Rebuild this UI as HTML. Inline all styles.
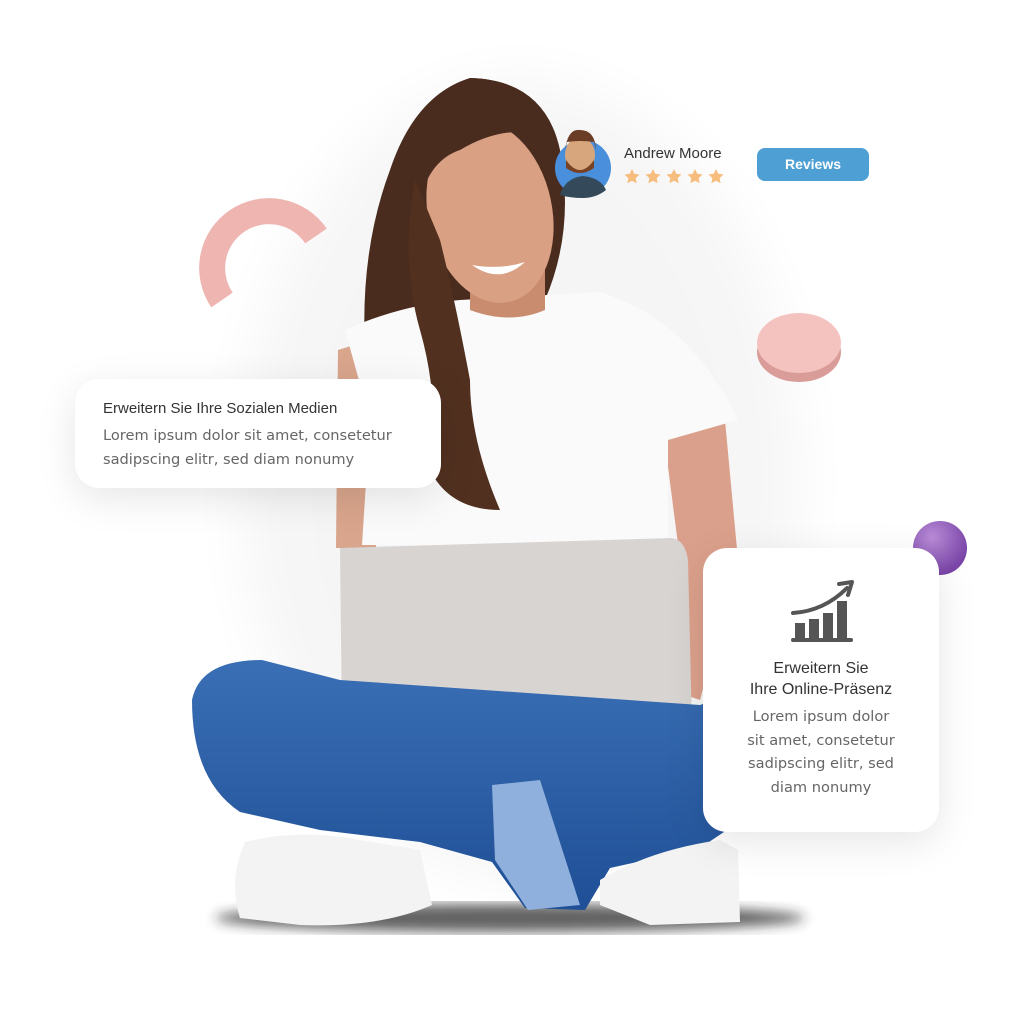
<!DOCTYPE html>
<html><head><meta charset="utf-8">
<style>
html,body{margin:0;padding:0;background:#fff;}
body{width:1015px;height:1025px;position:relative;overflow:hidden;font-family:"Liberation Sans",sans-serif;}
.card{position:absolute;background:#fff;border-radius:24px;box-shadow:0 10px 40px rgba(0,0,0,0.10);}
.h{font-family:"Liberation Sans",sans-serif;color:#333;font-size:15px;}
.p{font-family:"DejaVu Sans",sans-serif;color:#666;font-size:14.6px;line-height:23.5px;}
</style></head><body>
<svg width="1015" height="1025" style="position:absolute;left:0;top:0">
<defs>
<filter id="b20"><feGaussianBlur stdDeviation="30"/></filter>
<filter id="b6"><feGaussianBlur stdDeviation="6"/></filter>
<radialGradient id="pur" cx="0.35" cy="0.3" r="0.7"><stop offset="0" stop-color="#b88bd6"/><stop offset="1" stop-color="#7a45a8"/></radialGradient>
<linearGradient id="jean" x1="0" y1="0" x2="0" y2="1"><stop offset="0" stop-color="#3a6fb5"/><stop offset="1" stop-color="#1f4f96"/></linearGradient>
</defs>
<ellipse cx="520" cy="480" rx="280" ry="400" fill="#000" opacity="0.035" filter="url(#b20)"/>
<path d="M222 300 A52 52 0 1 1 316 236" fill="none" stroke="#efb6b1" stroke-width="26"/>
<ellipse cx="799" cy="352" rx="42" ry="30" fill="#d99c98"/>
<ellipse cx="799" cy="343" rx="42" ry="30" fill="#f5c3bf"/>
<circle cx="940" cy="548" r="27" fill="url(#pur)"/>
<ellipse cx="510" cy="918" rx="295" ry="14" fill="#222" opacity="0.7" filter="url(#b6)"/>
<path d="M470 78 Q545 80 560 150 Q575 230 545 300 L520 330 Q500 420 520 510 L470 505 Q430 470 420 420 Q395 380 365 350 Q360 250 390 170 Q415 95 470 78Z" fill="#4a2c1e"/>
<path d="M338 350 L370 340 L376 548 L336 548Z" fill="#d9a58c"/>
<path d="M662 420 L725 420 L738 560 L700 700 L670 690 L680 560Z" fill="#dba08b"/>
<path d="M345 330 Q400 305 460 300 L600 292 Q690 320 738 420 L668 440 L668 545 L362 545 L370 420 Z" fill="#fafafa"/>
<path d="M470 270 L545 270 L545 310 Q510 325 470 310Z" fill="#c98c6f"/>
<ellipse cx="490" cy="212" rx="62" ry="92" transform="rotate(-12 490 212)" fill="#d9a084"/>
<path d="M470 78 Q540 80 555 140 Q510 120 460 150 Q430 160 420 200 Q415 120 470 78Z" fill="#4a2c1e"/>
<path d="M472 265 Q500 285 525 262 Q500 270 472 265Z" fill="#fff"/>
<path d="M415 180 Q400 260 420 330 Q440 400 430 470 Q450 510 500 510 Q470 440 470 380 Q455 300 440 240Z" fill="#51301f"/>
<path d="M340 548 L672 538 Q685 540 688 560 L692 728 L350 736 Q342 736 342 725Z" fill="#d8d4d2"/>
<path d="M192 700 Q200 660 262 660 L340 680 L700 705 L738 690 L742 820 L700 848 L610 868 L585 910 L525 908 L492 862 L420 842 L320 830 L240 812 Q192 780 192 700Z" fill="url(#jean)"/>
<path d="M492 785 L540 780 L580 905 L528 910 L495 860Z" fill="#8fb0dc"/>
<path d="M245 842 Q300 828 360 840 L420 850 L432 905 Q380 928 300 925 L240 918 Q228 880 245 842Z" fill="#f3f3f3"/>
<path d="M600 880 Q650 850 720 840 L738 850 L740 922 L650 925 L600 905Z" fill="#f3f3f3"/>
<circle cx="583" cy="168" r="28" fill="#4a8fdc"/>
<path d="M560 195 Q565 178 583 176 Q601 178 606 190 Q596 198 583 198 Q570 198 560 195Z" fill="#344a5a"/>
<ellipse cx="580" cy="155" rx="15" ry="18" fill="#d7a67c"/>
<path d="M565 150 Q568 128 580 130 Q595 130 596 150 L594 142 Q580 140 567 142Z" fill="#6b3d26"/>
<path d="M566 160 Q580 180 594 160 L594 168 Q580 178 566 168Z" fill="#7a4225"/>
<g fill="#f7bd7e">
<path id="st" d="M632 169 l2.3 4.8 5.2 .7 -3.8 3.6 .9 5.2 -4.6 -2.5 -4.6 2.5 .9 -5.2 -3.8 -3.6 5.2 -.7z"/>
<use href="#st" x="21"/><use href="#st" x="42"/><use href="#st" x="63"/><use href="#st" x="84"/>
</g>
</svg>
<div style="position:absolute;left:624px;top:145px;font-size:15px;color:#333;">Andrew Moore</div>
<div style="position:absolute;left:757px;top:148px;width:112px;height:33px;border-radius:8px;background:#4d9fd4;color:#fff;font-weight:bold;font-size:14px;text-align:center;line-height:33px;">Reviews</div>

<div class="card" style="left:75px;top:379px;width:366px;height:109px;">
<div class="h" style="position:absolute;left:28px;top:21px;">Erweitern Sie Ihre Sozialen Medien</div>
<div class="p" style="position:absolute;left:28px;top:45px;white-space:nowrap;">Lorem ipsum dolor sit amet, consetetur<br>sadipscing elitr, sed diam nonumy</div>
</div>

<div class="card" style="left:703px;top:548px;width:236px;height:284px;text-align:center;">
<svg width="70" height="66" style="position:absolute;left:86px;top:28px" viewBox="0 0 70 66">
<path d="M4 37 Q35 35 58 12" fill="none" stroke="#555" stroke-width="4" stroke-linecap="round"/>
<path d="M50 8 L63 6 L59 19" fill="none" stroke="#555" stroke-width="4" stroke-linecap="round" stroke-linejoin="round"/>
<rect x="6" y="47" width="10" height="16" fill="#555"/>
<rect x="20" y="43" width="10" height="20" fill="#555"/>
<rect x="34" y="37" width="10" height="26" fill="#555"/>
<rect x="48" y="25" width="10" height="38" fill="#555"/>
<rect x="2" y="62" width="62" height="4" rx="2" fill="#555"/>
</svg>
<div class="h" style="position:absolute;left:0;width:236px;top:110px;font-size:16px;line-height:21px;">Erweitern Sie<br>Ihre Online-Präsenz</div>
<div class="p" style="position:absolute;left:0;width:236px;top:157px;">Lorem ipsum dolor<br>sit amet, consetetur<br>sadipscing elitr, sed<br>diam nonumy</div>
</div>
</body></html>
